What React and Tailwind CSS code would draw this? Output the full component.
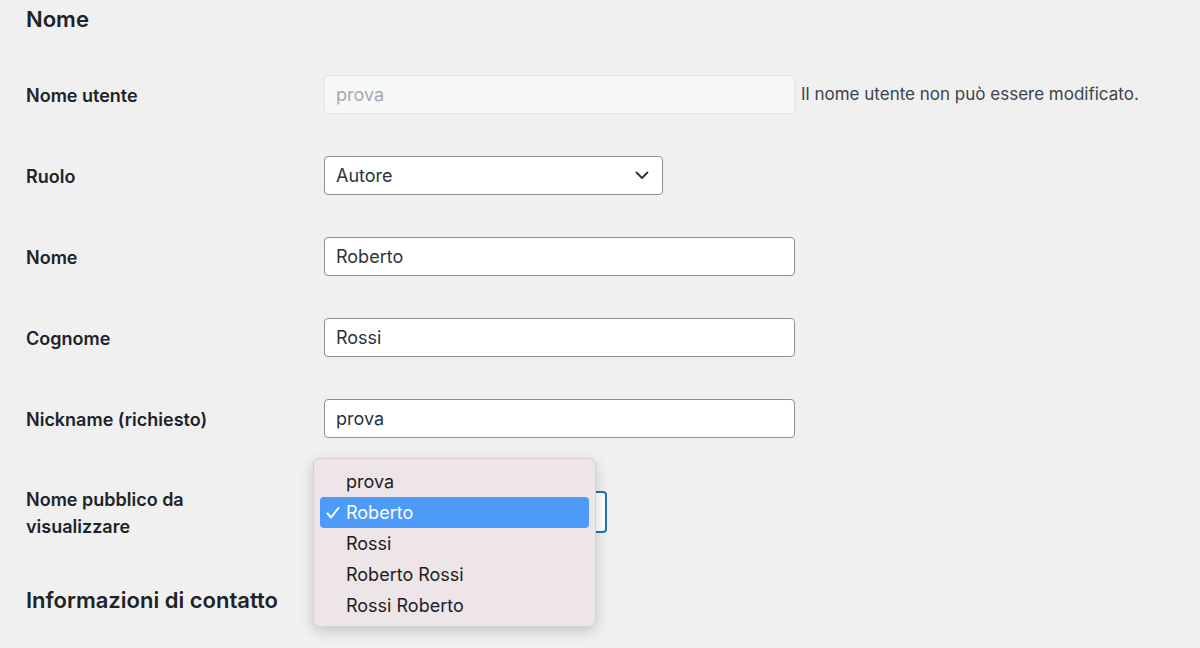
import React from "react";

const font = { fontFamily: "Inter, 'Noto Sans', 'Liberation Sans', sans-serif" };

const Row = ({ label, children, className = "h-[81px]" }) => (
  <div className={`flex items-center ${className}`}>
    <div className="w-[298px] shrink-0 pt-[2px] text-[18px] font-semibold leading-[27px] text-[#1d2327]">
      {label}
    </div>
    {children}
  </div>
);

const TextInput = ({ value }) => (
  <div className="flex h-[39px] w-[471px] items-center rounded-[4px] border border-[#8c8f94] bg-white px-[11px] text-[18px] text-[#2c3338]">
    {value}
  </div>
);

const Chevron = () => (
  <svg width="14" height="9" viewBox="0 0 14 9" fill="none">
    <path d="M1.5 1.5 L7 7 L12.5 1.5" stroke="#2c3338" strokeWidth="1.8" strokeLinecap="round" strokeLinejoin="round" />
  </svg>
);

const Check = () => (
  <svg width="14" height="14" viewBox="0 0 14 14" fill="none">
    <path d="M1.5 7.5 L5 11.5 L12.5 2" stroke="white" strokeWidth="2" strokeLinecap="round" strokeLinejoin="round" />
  </svg>
);

const options = ["prova", "Roberto", "Rossi", "Roberto Rossi", "Rossi Roberto"];

export default function App() {
  return (
    <div className="min-h-[648px] w-full bg-[#f0f0f1] pl-[26px]" style={font}>
      <div className="h-[54px] pt-[6px]">
        <h2 className="text-[22px] font-semibold leading-[26px] text-[#1d2327]">Nome</h2>
      </div>

      <Row label="Nome utente">
        <div className="flex h-[39px] w-[471px] items-center rounded-[4px] border border-[#e2e4e7] bg-[#f6f7f7] px-[11px] text-[18px] text-[#a7aaad]">
          prova
        </div>
        <span className="ml-[6px] text-[17px] text-[#3c434a]">
          Il nome utente non può essere modificato.
        </span>
      </Row>

      <Row label="Ruolo">
        <div className="flex h-[39px] w-[339px] items-center justify-between rounded-[4px] border border-[#8c8f94] bg-white pl-[11px] pr-[13px] text-[18px] text-[#2c3338]">
          <span>Autore</span>
          <Chevron />
        </div>
      </Row>

      <Row label="Nome">
        <TextInput value="Roberto" />
      </Row>

      <Row label="Cognome">
        <TextInput value="Rossi" />
      </Row>

      <Row label={<>Nickname (richiesto)</>}>
        <TextInput value="prova" />
      </Row>

      <Row label={<>Nome pubblico da<br />visualizzare</>} className="h-[106px]">
        <div className="relative">
          <div className="h-[42px] w-[283px] rounded-[4px] border-2 border-[#2271b1] bg-white" />
          <div className="absolute left-[-11px] top-[-33px] h-[169px] w-[283px] rounded-[7px] border border-[#d6d0d2] bg-[#ede5e8] px-[6px] pt-[7px] shadow-[0_4px_14px_rgba(0,0,0,0.18)]">
            {options.map((o) => {
              const sel = o === "Roberto";
              return (
                <div
                  key={o}
                  className={`flex h-[31px] items-center rounded-[4px] text-[18px] ${
                    sel ? "bg-[#4c9bfa] text-white" : "text-[#1d1d1f]"
                  }`}
                >
                  <span className="flex w-[26px] justify-start pl-[6px]">{sel ? <Check /> : null}</span>
                  <span>{o}</span>
                </div>
              );
            })}
          </div>
        </div>
      </Row>

      <div className="flex h-[70px] items-center">
        <h2 className="text-[22px] font-semibold leading-[26px] text-[#1d2327]">
          Informazioni di contatto
        </h2>
      </div>
    </div>
  );
}
